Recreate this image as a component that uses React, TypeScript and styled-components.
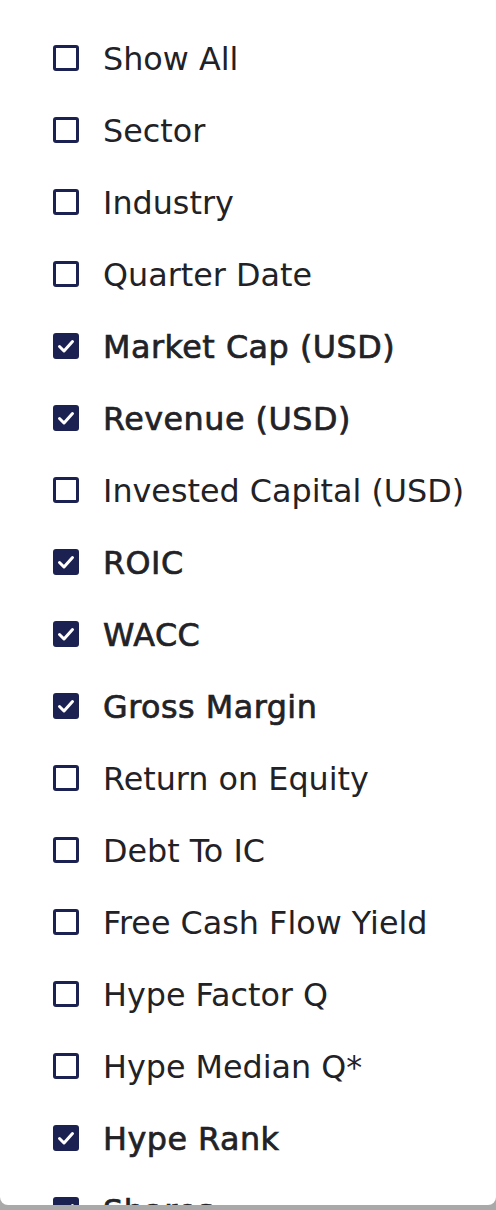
import React from "react";
import styled, { createGlobalStyle } from "styled-components";

const GlobalStyle = createGlobalStyle`
  html, body { margin: 0; padding: 0; }
  body {
    background: #a9a9a9;
    font-family: "DejaVu Sans", "Noto Sans", sans-serif;
    overflow: hidden;
  }
`;

const Panel = styled.div`
  width: 496px;
  height: 1205px;
  background: #ffffff;
  border-radius: 0 0 8px 8px;
  overflow: hidden;
  box-sizing: border-box;
  padding-top: 22px;
`;

const List = styled.ul`
  list-style: none;
  margin: 0;
  padding: 0 0 0 53px;
`;

const Row = styled.li`
  height: 72px;
  display: flex;
  align-items: center;
  gap: 24px;
`;

const Box = styled.span<{ $checked: boolean }>`
  width: 26px;
  height: 26px;
  flex: none;
  box-sizing: border-box;
  border-radius: 3px;
  border: 3px solid #1b2150;
  background: ${(p) => (p.$checked ? "#1b2150" : "#ffffff")};
  display: flex;
  align-items: center;
  justify-content: center;
`;

const Label = styled.span<{ $checked: boolean }>`
  font-size: 31.8px;
  color: #222226;
  font-weight: 400;
  white-space: nowrap;
  letter-spacing: ${(p) => (p.$checked ? "0.5px" : "0")};
  -webkit-text-stroke: ${(p) => (p.$checked ? "0.7px #222226" : "0")};
`;

const items: [string, boolean][] = [
  ["Show All", false],
  ["Sector", false],
  ["Industry", false],
  ["Quarter Date", false],
  ["Market Cap (USD)", true],
  ["Revenue (USD)", true],
  ["Invested Capital (USD)", false],
  ["ROIC", true],
  ["WACC", true],
  ["Gross Margin", true],
  ["Return on Equity", false],
  ["Debt To IC", false],
  ["Free Cash Flow Yield", false],
  ["Hype Factor Q", false],
  ["Hype Median Q*", false],
  ["Hype Rank", true],
  ["Shares", true],
];

const Check = () => (
  <svg width="18" height="18" viewBox="0 0 18 18" fill="none">
    <path d="M2.5 9.5 L7 14 L15.5 4.5" stroke="#ffffff" strokeWidth="3" strokeLinecap="round" strokeLinejoin="round" />
  </svg>
);

export default function App() {
  return (
    <>
      <GlobalStyle />
      <Panel>
        <List>
          {items.map(([label, checked]) => (
            <Row key={label}>
              <Box $checked={checked}>{checked && <Check />}</Box>
              <Label $checked={checked}>{label}</Label>
            </Row>
          ))}
        </List>
      </Panel>
    </>
  );
}
